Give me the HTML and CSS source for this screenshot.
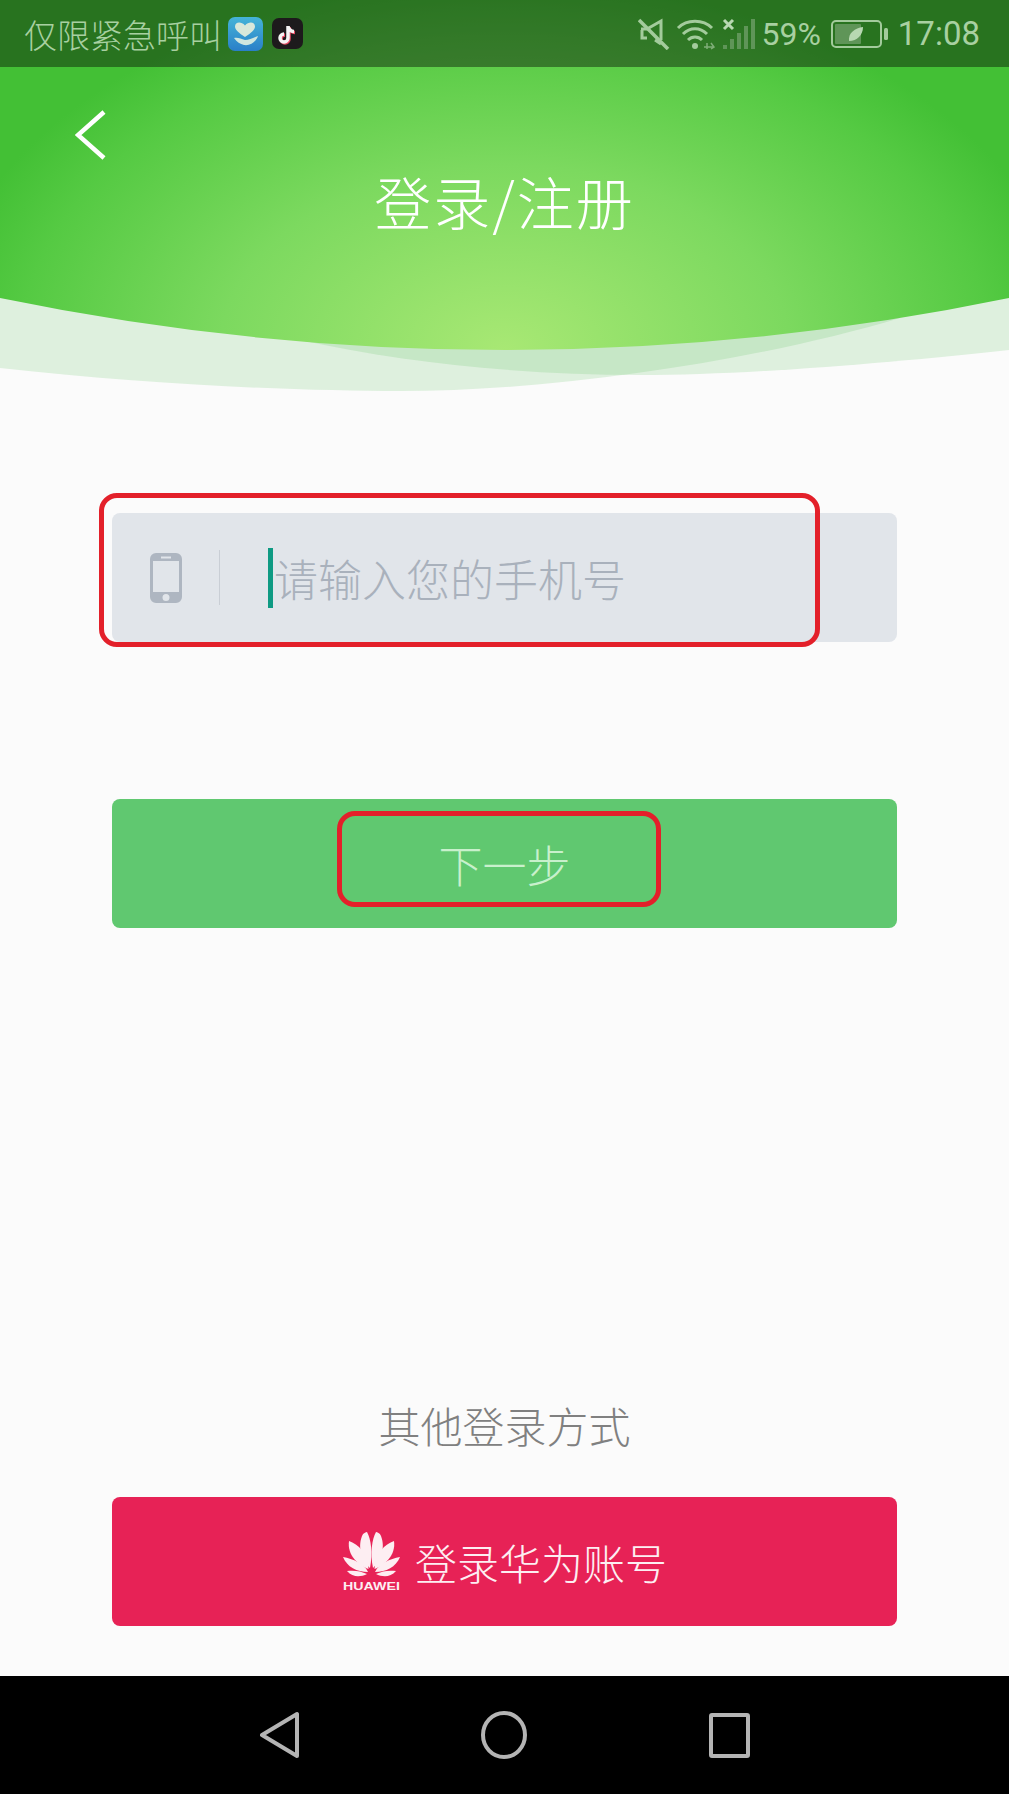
FILE: index.html
```html
<!DOCTYPE html>
<html lang="zh-CN">
<head>
    <meta charset="UTF-8">
    <meta name="viewport" content="width=device-width, initial-scale=1.0">
    <title>登录/注册</title>
    <link rel="stylesheet" href="styles.css">
</head>
<body>

<div class="page">
    <div class="top">
        <svg class="wave" width="1009" height="400" viewBox="0 0 1009 400">
            <defs>
                <radialGradient id="greenGlow" gradientUnits="userSpaceOnUse" cx="0" cy="0" r="1" gradientTransform="translate(505 350) scale(570 370)">
                    <stop offset="0" stop-color="#a8e874"/>
                    <stop offset="0.5" stop-color="#7cd95f"/>
                    <stop offset="0.85" stop-color="#55ca43"/>
                    <stop offset="1" stop-color="#43c035"/>
                </radialGradient>
            </defs>
            <path class="band" d="M0 298V368C150 385 300 391 400 391C560 391 760 360 900 318V298Z"/>
            <path class="band" d="M1009 298V350C900 362 750 375 640 375C520 375 400 362 300 340V298Z"/>
            <path d="M0 0H1009V298Q505 402 0 298Z" fill="url(#greenGlow)"/>
        </svg>

        <!-- barra de estado -->
        <div class="status-bar">
            <span class="carrier">仅限紧急呼叫</span>
            <svg class="app-icon heart-app" width="35" height="34" viewBox="0 0 35 34">
                <defs>
                    <linearGradient id="heartBg" x1="0" y1="0" x2="0" y2="1">
                        <stop offset="0" stop-color="#45b4d8"/>
                        <stop offset="1" stop-color="#2a7fc8"/>
                    </linearGradient>
                </defs>
                <rect width="35" height="34" rx="7" fill="url(#heartBg)"/>
                <path d="M17 20C11 16 7 13 7 9.500C7 5 13 4 17 8.500C21 4 27 5 27 9.500C27 13 23 16 17 20Z" fill="#d9e8da"/>
                <path d="M6 21C10 20 13 22 17 23C21 23 25 21 30 19C28 25 22 29 16 28C12 27 9 25 6 21Z" fill="#cfe6df"/>
            </svg>
            <svg class="app-icon tiktok-app" width="31" height="31" viewBox="0 0 31 31">
                <rect width="31" height="31" rx="7" fill="#1d1a1c"/>
                <path d="M16 8V20A4 4 0 1 1 12 16M16 8C16 11 19 13.500 22 13.500" fill="none" stroke="#e84a63" stroke-width="3.500" transform="translate(1 1)"/>
                <path d="M16 8V20A4 4 0 1 1 12 16M16 8C16 11 19 13.500 22 13.500" fill="none" stroke="#f4f4f4" stroke-width="3.500"/>
            </svg>

            <div class="status-right">
                <svg class="ic-mute" width="32" height="32" viewBox="0 0 32 32" fill="none" stroke="#a3cb9c" stroke-width="3">
                    <path d="M3 11H9L23 3V22M23 26L17 22M9 20H4V12"/>
                    <path d="M1 2L30 31" stroke-width="3.500"/>
                </svg>
                <svg class="ic-wifi" width="40" height="32" viewBox="0 0 40 32" fill="none" stroke="#a3cb9c" stroke-width="3">
                    <path d="M2 10C11 1 27 1 36 10"/>
                    <path d="M7 16C14 9 24 9 31 16"/>
                    <path d="M12 22C16 18 22 18 26 22"/>
                    <circle cx="19" cy="28" r="3" fill="#a3cb9c" stroke="none"/>
                    <path d="M28 29H38M31 25V31M35 25L38 29L35 31" stroke="#7fae78" stroke-width="1.500"/>
                </svg>
                <svg class="ic-signal" width="34" height="32" viewBox="0 0 34 32">
                    <path d="M2 2L11 11M11 2L2 11" stroke="#b8d8b2" stroke-width="3" fill="none"/>
                    <rect x="1" y="27" width="4" height="4" fill="#5f9558"/>
                    <rect x="8" y="21" width="4" height="10" fill="#5f9558"/>
                    <rect x="15" y="15" width="4" height="16" fill="#5f9558"/>
                    <rect x="22" y="8" width="4" height="23" fill="#5f9558"/>
                    <rect x="29" y="1" width="4" height="30" fill="#5f9558"/>
                </svg>
                <span class="percent">59%</span>
                <svg class="ic-battery" width="57" height="28" viewBox="0 0 57 28">
                    <rect x="1" y="1" width="49" height="26" rx="4" fill="none" stroke="#a3cb9c" stroke-width="2"/>
                    <rect x="4" y="4" width="26" height="20" rx="1" fill="#5f9558"/>
                    <rect x="53" y="8" width="4" height="12" rx="1.500" fill="#a3cb9c"/>
                    <path d="M18 21C17 13 24 8 32 7C32 15 26 21 18 21Z" fill="#b8d8b2"/>
                </svg>
                <span class="clock">17:08</span>
            </div>
        </div>

        <div class="title-area">
            <svg class="back" width="31" height="50" viewBox="0 0 31 50" fill="none" stroke="#ffffff" stroke-width="4.500">
                <path d="M29 2L3 25L29 48"/>
            </svg>
            <h1 class="title">登录/注册</h1>
        </div>
    </div>

    <div class="form">
        <div class="phone-input">
            <svg class="ic-phone" width="32" height="50" viewBox="0 0 32 50">
                <path fill-rule="evenodd" d="M6 0H26A6 6 0 0 1 32 6V44A6 6 0 0 1 26 50H6A6 6 0 0 1 0 44V6A6 6 0 0 1 6 0ZM3 8V39H29V8ZM11 3.500V5.500H21V3.500ZM16 41A3.500 3.500 0 1 0 16 48A3.500 3.500 0 1 0 16 41Z" fill="#aeb6c1"/>
            </svg>
            <span class="divider"></span>
            <span class="cursor"></span>
            <span class="placeholder">请输入您的手机号</span>
            <span class="mark mark-input"></span>
        </div>

        <button class="btn btn-next">
            下一步
            <span class="mark mark-next"></span>
        </button>

        <p class="others">其他登录方式</p>

        <button class="btn btn-huawei">
            <svg class="huawei-logo" width="59" height="61" viewBox="0 0 59 61">
                <g id="petals" fill="#fdeef2">
                    <path d="M28 37C21 30 15 18 20 5C21 2 24 1 25 1C29 8 31 22 28 37Z"/>
                    <path d="M26.500 38C16 34 5 24 7 10C16 13 26 22 26.500 38Z"/>
                    <path d="M26 41C15 41 5 36 1 26C11 28 22 32 26 41Z"/>
                    <path d="M25 43C19 46 11 47 5 40C12 39 19 40 25 43Z"/>
                </g>
                <use href="#petals" transform="translate(59 0) scale(-1 1)"/>
                <text class="huawei-word" x="1" y="59" textLength="57" lengthAdjust="spacingAndGlyphs">HUAWEI</text>
            </svg>
            <span>登录华为账号</span>
        </button>
    </div>

    <div class="nav-bar">
        <svg width="39" height="48" viewBox="0 0 39 48" fill="none" stroke="#b4b4b4" stroke-width="4" stroke-linejoin="round">
            <path d="M37 3V45L2 24Z"/>
        </svg>
        <svg width="46" height="48" viewBox="0 0 46 48" fill="none" stroke="#b4b4b4" stroke-width="4">
            <ellipse cx="23" cy="24" rx="21" ry="22"/>
        </svg>
        <svg width="41" height="45" viewBox="0 0 41 45" fill="none" stroke="#b4b4b4" stroke-width="4" stroke-linejoin="round">
            <rect x="2" y="2" width="37" height="41" rx="1"/>
        </svg>
    </div>
</div>

</body>
</html>
```

FILE: styles.css
```css
* {
    box-sizing: border-box;
}

body {
    margin: 0;
    background-color: #fbfbfb;
    font-family: "Noto Sans CJK SC", "Noto Sans", sans-serif;
}

.page {
    width: 1009px;
    height: 1794px;
    display: flex;
    flex-direction: column;
    overflow: hidden;
}

.top {
    position: relative;
    height: 397px;
    flex-shrink: 0;
}

.wave {
    position: absolute;
    top: 0;
    left: 0;
}

.band {
    fill: #4cb848;
    fill-opacity: 0.16;
}

.status-bar {
    position: relative;
    height: 67px;
    display: flex;
    align-items: center;
    padding: 0 29px 0 24px;
    background-color: rgba(0, 0, 0, 0.4);
    color: #a8d0a1;
    font-size: 33px;
    font-weight: 300;
}

.carrier {
    width: 204px;
    white-space: nowrap;
}

.tiktok-app {
    margin-left: 9px;
}

.status-right {
    margin-left: auto;
    display: flex;
    align-items: center;
    font-family: Roboto, "Liberation Sans", sans-serif;
    font-weight: 400;
}

.ic-wifi {
    margin-left: 6px;
}

.ic-signal {
    margin-left: 6px;
}

.percent {
    margin-left: 5px;
    font-size: 32px;
}

.ic-battery {
    margin-left: 10px;
}

.clock {
    margin-left: 10px;
    font-size: 33px;
}

.title-area {
    position: relative;
    padding-top: 43px;
}

.back {
    display: block;
    margin-left: 75px;
}

.title {
    margin: 9px 0 0;
    font-size: 57px;
    line-height: 62px;
    letter-spacing: 2px;
    font-weight: 300;
    color: #ffffff;
    text-align: center;
}

.form {
    padding: 116px 112px 0;
}

.phone-input {
    position: relative;
    height: 129px;
    display: flex;
    align-items: center;
    padding-left: 38px;
    background-color: #e1e5ea;
    border-radius: 8px;
}

.divider {
    width: 1px;
    height: 55px;
    margin-left: 37px;
    background-color: #c9ced5;
}

.cursor {
    width: 5px;
    height: 60px;
    margin-left: 48px;
    background-color: #0e9a83;
}

.placeholder {
    margin-left: 1px;
    font-size: 44px;
    font-weight: 300;
    color: #a9b1bc;
    white-space: nowrap;
}

.btn {
    position: relative;
    display: flex;
    align-items: center;
    justify-content: center;
    width: 100%;
    height: 129px;
    padding: 0;
    border: none;
    border-radius: 8px;
    font-family: inherit;
    font-weight: 300;
}

.btn-next {
    margin-top: 157px;
    background-color: #60c870;
    color: #c8f0cc;
    font-size: 44px;
}

.others {
    margin: 467px 0 42px;
    font-size: 42px;
    line-height: 60px;
    font-weight: 300;
    color: #808080;
    text-align: center;
}

.btn-huawei {
    background-color: #e72256;
    color: #fdeef2;
    font-size: 42px;
}

.huawei-logo {
    margin-right: 14px;
}

.huawei-word {
    font-family: "Liberation Sans", sans-serif;
    font-size: 11.500px;
    font-weight: 700;
    fill: #fdeef2;
}

/* recuadros rojos de la captura */
.mark {
    position: absolute;
    border: 5px solid #e3202a;
    border-radius: 18px;
}

.mark-input {
    left: -13px;
    top: -20px;
    width: 721px;
    height: 154px;
}

.mark-next {
    left: 225px;
    top: 12px;
    width: 324px;
    height: 96px;
}

.nav-bar {
    height: 118px;
    margin-top: auto;
    display: flex;
    align-items: center;
    justify-content: center;
    gap: 182px;
    background-color: #000000;
}
```
